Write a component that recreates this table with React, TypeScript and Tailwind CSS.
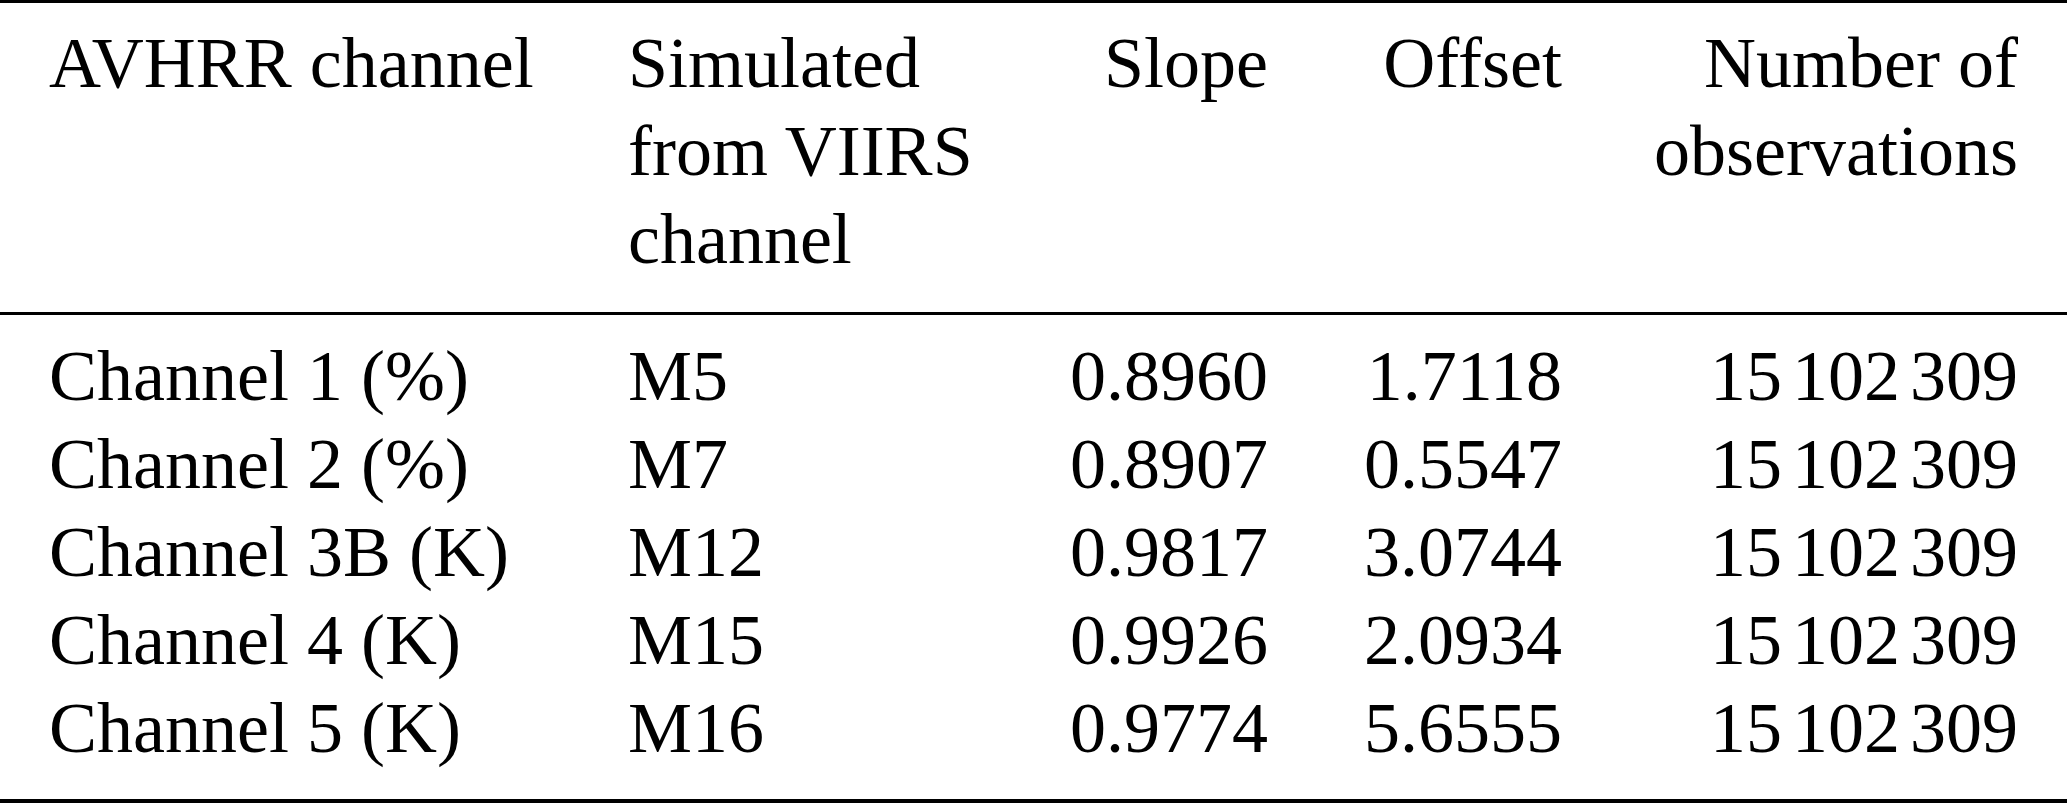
import React from "react";

type Row = { ch: string; sim: string; slope: string; offset: string };

const rows: Row[] = [
  { ch: "Channel 1 (%)", sim: "M5", slope: "0.8960", offset: "1.7118" },
  { ch: "Channel 2 (%)", sim: "M7", slope: "0.8907", offset: "0.5547" },
  { ch: "Channel 3B (K)", sim: "M12", slope: "0.9817", offset: "3.0744" },
  { ch: "Channel 4 (K)", sim: "M15", slope: "0.9926", offset: "2.0934" },
  { ch: "Channel 5 (K)", sim: "M16", slope: "0.9774", offset: "5.6555" },
];

function Obs() {
  return (
    <span>
      15<span className="ml-[10px]">102</span>
      <span className="ml-[10px]">309</span>
    </span>
  );
}

export default function App() {
  return (
    <div className="w-[2067px] h-[804px] bg-white text-black font-['Liberation_Serif',_'Times_New_Roman',_serif] text-[72px] leading-[88px]">
      <div className="border-t-[3px] border-black">
        <div className="grid grid-cols-[579px_372px_268px_294px_456px] px-[49px] pt-[16px] pb-[29px] border-b-[3px] border-black">
          <div>AVHRR channel</div>
          <div>
            Simulated
            <br />
            from VIIRS
            <br />
            channel
          </div>
          <div className="text-right">Slope</div>
          <div className="text-right">Offset</div>
          <div className="text-right">
            Number of
            <br />
            observations
          </div>
        </div>
        <div className="px-[49px] pt-[17px] pb-[27px] border-b-[4px] border-black">
          {rows.map((r) => (
            <div
              key={r.ch}
              className="grid grid-cols-[579px_372px_268px_294px_456px]"
            >
              <div>{r.ch}</div>
              <div>{r.sim}</div>
              <div className="text-right">{r.slope}</div>
              <div className="text-right">{r.offset}</div>
              <div className="text-right">
                <Obs />
              </div>
            </div>
          ))}
        </div>
      </div>
    </div>
  );
}
